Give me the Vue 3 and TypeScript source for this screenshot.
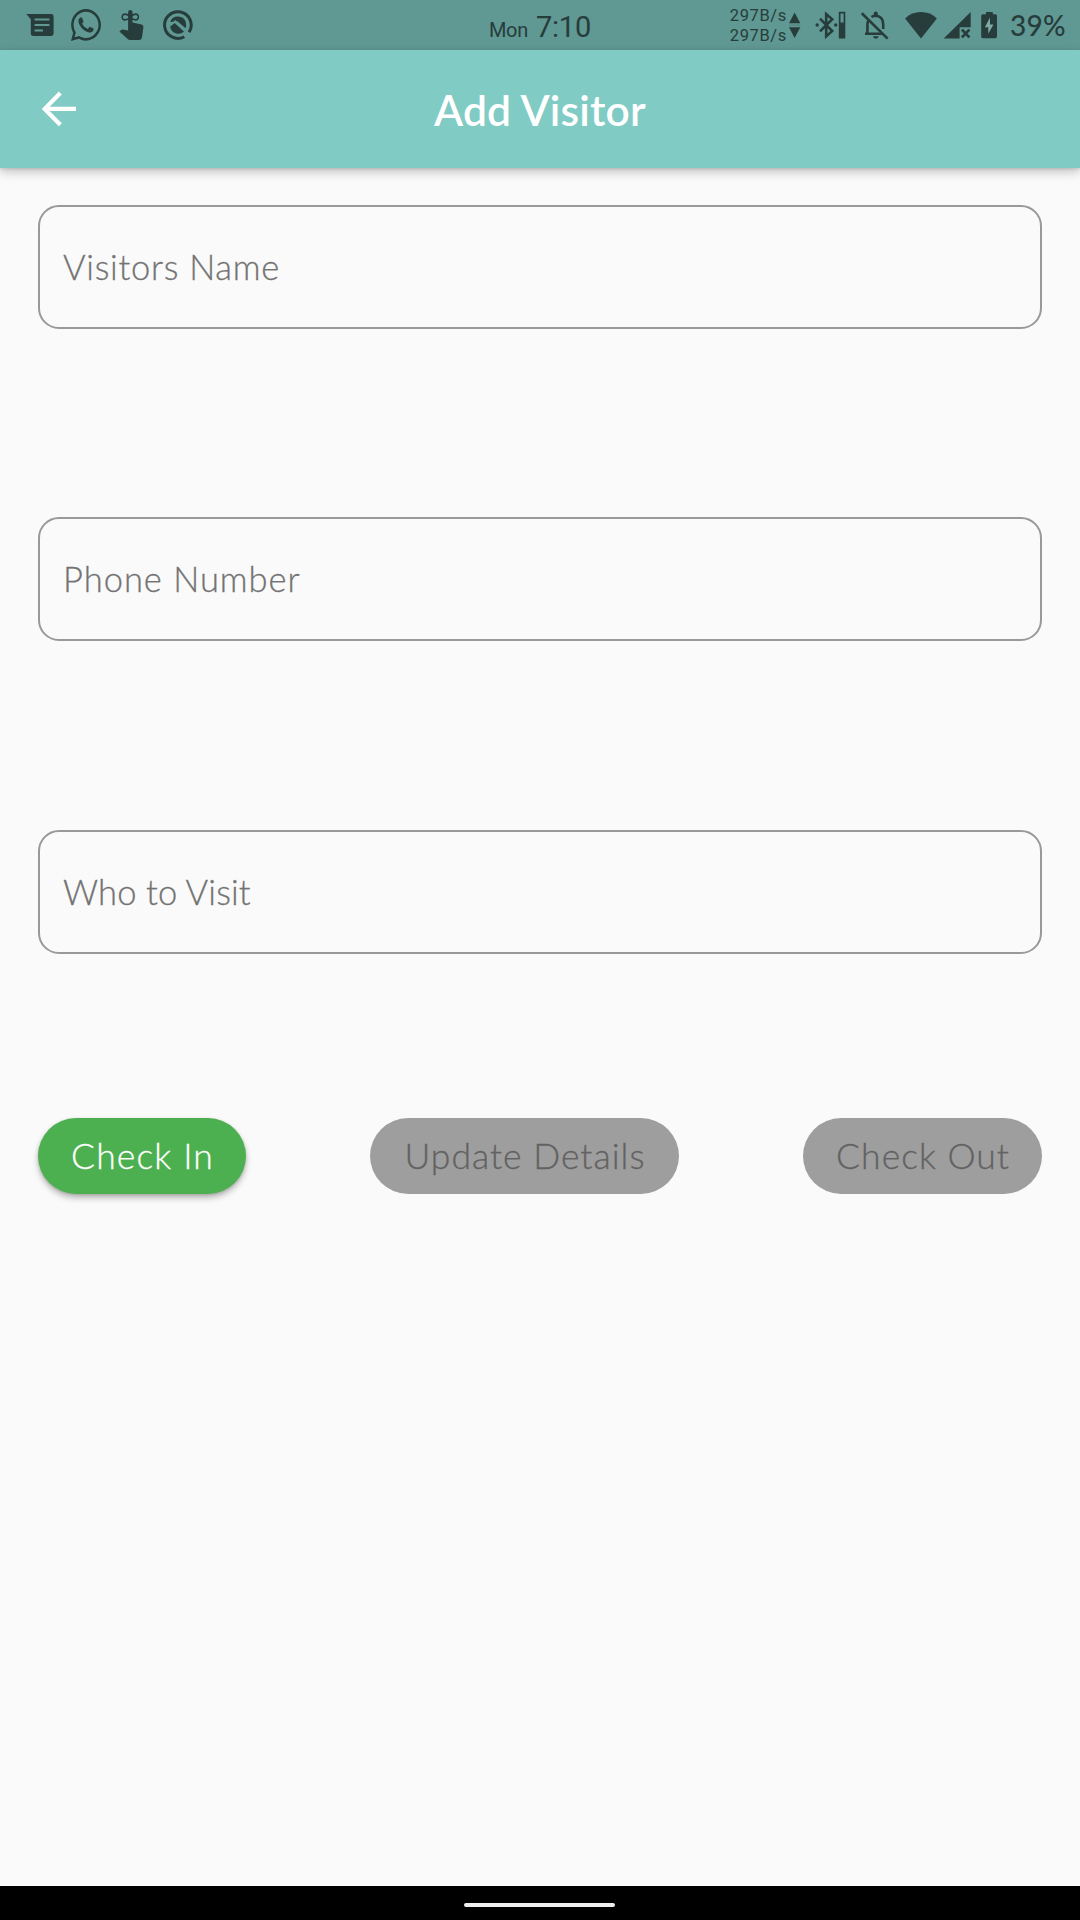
<script setup lang="ts">
interface Field {
  id: string
  label: string
}

interface Action {
  id: string
  label: string
  enabled: boolean
}

const fields: Field[] = [
  { id: 'name', label: 'Visitors Name' },
  { id: 'phone', label: 'Phone Number' },
  { id: 'host', label: 'Who to Visit' },
]

const actions: Action[] = [
  { id: 'check-in', label: 'Check In', enabled: true },
  { id: 'update', label: 'Update Details', enabled: false },
  { id: 'check-out', label: 'Check Out', enabled: false },
]
</script>

<template>
  <div class="screen">
    <header class="status">
      <div class="notifications">
        <svg width="28" height="34" viewBox="26 8 28 34">
          <path d="M26.3 14H51.2a2.4 2.4 0 0 1 2.4 2.4V33.6a2.4 2.4 0 0 1-2.4 2.4H33.2a2.4 2.4 0 0 1-2.4-2.4V19.2Z" />
          <path class="cut" d="M34.6 19.4H49.4M34.6 24.9H49.4M34.6 30.4H43" />
        </svg>
        <svg class="whatsapp" width="30" height="32" viewBox="0 32 448 448" preserveAspectRatio="none">
          <path d="M380.9 97.1C339 55.1 283.2 32 223.9 32c-122.4 0-222 99.6-222 222 0 39.1 10.2 77.3 29.6 111L0 480l117.7-30.9c32.4 17.7 68.9 27 106.1 27h.1c122.3 0 224.1-99.6 224.1-222 0-59.3-25.2-115-67.1-157zm-157 341.6c-33.2 0-65.7-8.9-94-25.7l-6.7-4-69.8 18.3L72 359.2l-4.4-7c-18.5-29.4-28.2-63.3-28.2-98.2 0-101.7 82.8-184.5 184.6-184.5 49.3 0 95.6 19.2 130.4 54.1 34.8 34.9 56.2 81.2 56.1 130.5 0 101.8-84.9 184.6-186.6 184.6zm101.2-138.2c-5.5-2.8-32.8-16.2-37.9-18-5.1-1.9-8.8-2.8-12.5 2.8-3.7 5.6-14.3 18-17.6 21.8-3.2 3.7-6.5 4.2-12 1.4-32.6-16.3-54-29.1-75.5-66-5.7-9.8 5.7-9.1 16.3-30.3 1.8-3.7.9-6.9-.5-9.7-1.4-2.8-12.5-30.1-17.1-41.2-4.5-10.8-9.1-9.3-12.5-9.5-3.2-.2-6.9-.2-10.6-.2-3.7 0-9.7 1.4-14.8 6.9-5.1 5.6-19.4 19-19.4 46.3 0 27.3 19.9 53.7 22.6 57.4 2.8 3.7 39.1 59.7 94.8 83.8 35.2 15.2 49 16.5 66.6 13.9 10.7-1.6 32.8-13.4 37.4-26.4 4.6-13 4.6-24.1 3.2-27.6-1.3-3.5-5-4.9-10.5-7.7z" />
        </svg>
        <svg width="26" height="34" viewBox="119 8 26 34">
          <path d="M128.1 12.2a2.2 2.2 0 0 1 4.4 0V22.6L141.6 24.6Q143.6 25.2 143.4 27.2L142 37.6Q141.6 39.9 139.4 39.9H130.2Q128.6 39.9 127.4 38.7L119.4 31.4L121.2 29.9Q122 29.3 123 29.5L128.1 30.6Z" />
          <path class="line thin" d="M130.3 17C127 13.4 122.2 13 122.2 17S127 20.6 130.3 17C133.6 13.4 138.4 13 138.4 17S133.6 20.6 130.3 17Z" />
        </svg>
        <svg class="circle" width="32" height="34" viewBox="162 8 32 34">
          <path class="line ring" d="M184.3 36.7A13.3 13.3 0 1 1 189.1 32.2" />
          <path d="M170.2 22A8.3 8.3 0 0 1 185.9 22.4Q186.6 26 185.6 28.3L177.8 21.5ZM170.2 26.4L174.6 22.9L184.2 31.4A8.3 8.3 0 0 1 170.2 26.4Z" />
          <path class="cut slim" d="M170 25.2L175.4 21.3L187.4 34" />
        </svg>
      </div>

      <div class="clock"><span class="day">Mon</span><span class="time">7:10</span></div>

      <div class="indicators">
        <div class="speed"><span>297B/s</span><span>297B/s</span></div>
        <svg class="arrows" width="12" height="34" viewBox="789 8 12 34">
          <path d="M794.6 12.4L800.3 23.2H789ZM794.6 38L800.3 27.2H789Z" />
          <path class="cut faint" d="M789 25.2H800.3" />
        </svg>
        <svg class="bluetooth" width="31" height="34" viewBox="815 8 31 34">
          <path class="line" d="M820 18.6L832.2 31L826.2 36.4V14L832.2 19.2L820 31.4" />
          <circle cx="817.2" cy="25" r="1.7" />
          <circle cx="835.7" cy="25" r="1.7" />
          <path fill-rule="evenodd" d="M838.8 11.8H845.3V38.4H838.8ZM840.5 13.5V22.4H843.6V13.5Z" />
        </svg>
        <svg class="bell" width="30" height="34" viewBox="860 8 30 34">
          <path class="line" d="M867.4 35V24.5Q867.4 22 868.8 20M865 33.7H883M871.4 17Q873.4 15.8 875.4 15.8Q883.2 16.3 883.2 24.3V29" />
          <path class="line" d="M861.8 13.2L887.6 38.6" />
          <path d="M873.8 14.8V13.4a2 2 0 0 1 4 0V16ZM872.9 36.2H878.8a3 3 0 0 1-5.9 0Z" />
        </svg>
        <svg class="wifi" width="32" height="34" viewBox="905 8 32 34">
          <path d="M921 38.4L905.1 18.4Q912 12 921 12T936.9 18.4Z" />
        </svg>
        <svg class="signal" width="28" height="34" viewBox="943 8 28 34">
          <path d="M970.7 11.9V27.2H959.6V38.4H943.7Z" />
          <path class="line cross" d="M961.9 29.6L969.4 37.4M969.4 29.6L961.9 37.4" />
        </svg>
        <svg class="battery" width="17" height="34" viewBox="981 8 17 34">
          <path d="M986 12H992.8V14.2H995.4A1.6 1.6 0 0 1 997 15.8V36.6A1.6 1.6 0 0 1 995.4 38.2H982.8A1.6 1.6 0 0 1 981.2 36.6V15.8A1.6 1.6 0 0 1 982.8 14.2H986Z" />
          <path class="bolt" d="M990 17.5V24.6H993.4L988.3 33.8V27.3H984.9Z" />
        </svg>
        <span class="percent">39%</span>
      </div>
    </header>

    <nav class="appbar">
      <svg class="back" width="36" height="36" viewBox="0 0 36 36">
        <path d="M34 17.9H3.6M18.3 2L2.7 17.9L18.3 33.8" />
      </svg>
      <h1>Add Visitor</h1>
    </nav>

    <main class="content">
      <div class="fields">
        <div v-for="field in fields" :key="field.id" class="field">
          <span :class="['label', field.id]">{{ field.label }}</span>
        </div>
      </div>
      <div class="actions">
        <button
          v-for="action in actions"
          :key="action.id"
          :class="['action', action.id]"
          :disabled="!action.enabled"
        >{{ action.label }}</button>
      </div>
    </main>

    <footer class="gesture"><div class="pill"></div></footer>
  </div>
</template>

<style>
body {
  background: #fafafa;
}
</style>

<style scoped>
.screen {
  width: 1080px;
  height: 1920px;
  display: flex;
  flex-direction: column;
  background: #fafafa;
  font-family: Lato, 'Open Sans', sans-serif;
  overflow: hidden;
}

.status {
  flex: none;
  height: 50px;
  display: grid;
  grid-template-columns: 1fr auto 1fr;
  align-items: center;
  background: #609893;
  color: #273d3b;
  white-space: nowrap;
}

.status svg {
  display: block;
  flex: none;
  fill: #273d3b;
}

.status .line {
  fill: none;
  stroke: #273d3b;
  stroke-width: 2.6;
}

.status .thin {
  stroke-width: 1.6;
}

.status .ring {
  stroke-width: 3;
}

.status .cross {
  stroke-width: 2.8;
}

.status .cut {
  fill: none;
  stroke: #609893;
  stroke-width: 2;
}

.status .slim {
  stroke-width: 1.8;
}

.status .faint {
  stroke: #527f7b;
  stroke-width: 1;
}

.status .bolt {
  fill: #7fa9a5;
}

.notifications {
  display: flex;
  align-items: center;
  gap: 18px;
  padding-left: 26px;
}

.notifications .whatsapp {
  margin-left: -1px;
}

.notifications .circle {
  margin-left: -1px;
}

.clock {
  display: flex;
  align-items: baseline;
  gap: 8px;
  font-family: Roboto, sans-serif;
  padding-top: 3px;
}

.day {
  font-size: 20px;
  letter-spacing: -0.3px;
}

.time {
  font-size: 29px;
  letter-spacing: -0.2px;
}

.indicators {
  display: flex;
  align-items: center;
  justify-content: flex-end;
  padding-right: 14px;
}

.speed {
  display: flex;
  flex-direction: column;
  padding-top: 2px;
  font-family: Roboto, sans-serif;
  font-size: 16.5px;
  line-height: 20px;
  letter-spacing: 0.6px;
}

.arrows {
  margin-left: 2px;
}

.bluetooth {
  margin-left: 14px;
}

.bell {
  margin-left: 14px;
}

.wifi {
  margin-left: 15px;
}

.signal {
  margin-left: 6px;
}

.battery {
  margin-left: 10px;
}

.percent {
  margin-left: 12px;
  font-size: 28px;
  line-height: 34px;
  font-weight: 500;
  letter-spacing: 0.35px;
}

.appbar {
  flex: none;
  height: 117.6px;
  display: grid;
  grid-template-columns: 78px 1fr 78px;
  align-items: center;
  background: #80cbc4;
  box-shadow: 0 4px 10px rgba(0, 0, 0, 0.22), 0 1px 3px rgba(0, 0, 0, 0.12);
}

.back {
  justify-self: end;
  fill: none;
  stroke: #fff;
  stroke-width: 4.2;
}

.appbar h1 {
  margin: 0;
  padding-top: 3px;
  color: #fff;
  font-size: 42.5px;
  line-height: 50px;
  font-weight: 600;
  letter-spacing: 0.2px;
  text-align: center;
}

.content {
  flex: 1;
  padding: 37.4px 38px 0;
}

.fields {
  display: flex;
  flex-direction: column;
  gap: 188.7px;
}

.field {
  height: 123.8px;
  box-sizing: border-box;
  display: flex;
  align-items: center;
  padding-left: 23px;
  border: 2px solid #999;
  border-radius: 21px;
}

.label {
  color: #737373;
  font-size: 34.5px;
  line-height: 42px;
  font-weight: 300;
  -webkit-text-stroke: 0.3px #737373;
}

.name {
  letter-spacing: 0.72px;
}

.phone {
  letter-spacing: 0.98px;
}

.host {
  letter-spacing: 0.12px;
}

.actions {
  display: flex;
  justify-content: space-between;
  margin-top: 164px;
}

.action {
  height: 76px;
  padding: 0 0 0 1px;
  border: 0;
  border-radius: 38px;
  background: #9e9e9e;
  color: #626262;
  font-family: inherit;
  font-size: 35.5px;
  font-weight: 300;
  line-height: 74px;
  letter-spacing: 1px;
  text-align: center;
  white-space: nowrap;
  -webkit-text-stroke: 0.3px currentColor;
}

.check-in {
  width: 208px;
  background: #4caf50;
  color: #fff;
  letter-spacing: 1.15px;
  box-shadow: 0 4px 6px rgba(0, 0, 0, 0.26), 0 1px 3px rgba(0, 0, 0, 0.14);
}

.update {
  width: 309px;
}

.check-out {
  width: 239px;
}

.gesture {
  flex: none;
  height: 34px;
  display: flex;
  align-items: center;
  justify-content: center;
  background: #000;
}

.pill {
  width: 151px;
  height: 4px;
  margin: 4px 1px 0 0;
  border-radius: 2px;
  background: #eee;
}
</style>
